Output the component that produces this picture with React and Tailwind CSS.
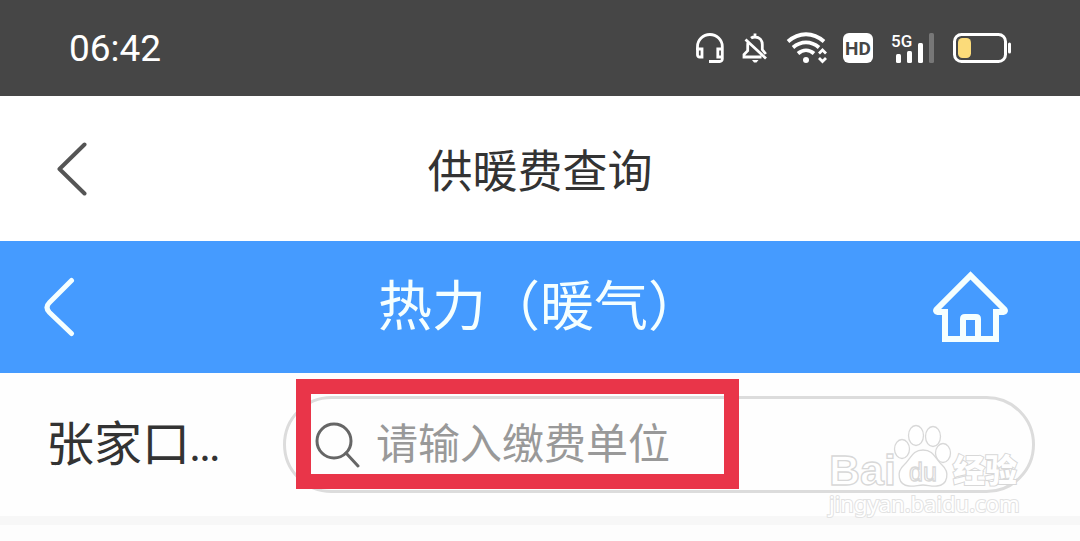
function StatusBar() {
  return (
    <header className="flex h-24 items-center justify-between bg-[#464646] px-[69px] text-white">
      <time className="font-['Roboto',sans-serif] text-[37px] font-normal leading-none">06:42</time>
      <div className="flex items-center gap-[18px]">
        <svg width="28" height="30" viewBox="0 0 28 30" fill="none" stroke="currentColor" strokeWidth="2.8" aria-hidden="true">
          <path d="M1.5 17V13.5a12.4 12 0 0 1 24.8 0V26a2.500 2.500 0 0 1-2.500 2.500H13" />
          <path d="M1.500 16H6v8H3.500a2 2 0 0 1-2-2zM26.300 16H21.800v8H26.300" />
        </svg>
        <svg width="26" height="30" viewBox="0 0 26 30" fill="none" stroke="currentColor" strokeWidth="2.800" aria-hidden="true">
          <path d="M9 5.200C10.200 4.300 11.400 4 13 4c4.600 0 7.300 3.200 7.300 7.500v5l3.500 4.500M6 9.500c-.3 1-.3 1.800-.3 3v5.200L2 21.500V24h17.500M13 0.500V4M3.500 6.500 24 25.500" />
          <path d="M10 27h6.500l-2 2.500h-2.500z" fill="currentColor" stroke="none" />
        </svg>
        <svg width="39" height="30" viewBox="-1 0 39 30" fill="none" stroke="currentColor" className="overflow-visible" aria-hidden="true">
          <path d="M1 8.500C12-1.200 26-1.200 37 8.500" strokeWidth="3.800" />
          <path d="M6 14.500c8-6.800 18-6.800 26 0" strokeWidth="3.800" />
          <path d="M11 20.500c5-4.300 11-4.300 16 0" strokeWidth="3.800" />
          <circle cx="19" cy="27" r="3" fill="currentColor" stroke="none" />
          <path d="m32 20.500 3.500-3.500 3.500 3.500M32 25l3.500 3.500L39 25" strokeWidth="2.800" />
        </svg>
        <span className="flex size-[30px] items-center justify-center rounded-md bg-white font-['Roboto',sans-serif] text-[19px] font-bold leading-none text-[#464646]">
          HD
        </span>
        <div className="relative h-[30px] w-11">
          <span className="absolute top-0 left-0 font-['Roboto',sans-serif] text-[17px] font-medium leading-4">5G</span>
          <svg width="44" height="30" viewBox="0 0 44 30" fill="currentColor" aria-hidden="true">
            <rect x="5" y="21" width="5" height="9" rx="1.500" />
            <rect x="16" y="18" width="5" height="12" rx="1.500" />
            <rect x="27" y="10" width="5" height="20" rx="1.500" />
            <rect x="38" y="0" width="5" height="30" rx="1.500" fill="#777" />
          </svg>
        </div>
        <svg width="58" height="30" viewBox="0 0 58 30" fill="none" aria-hidden="true">
          <rect x="1.500" y="1.500" width="51" height="27" rx="7" stroke="#fff" strokeWidth="3" />
          <rect x="5" y="5" width="13" height="20" rx="4.500" fill="#fbdb7a" />
          <rect x="55" y="9.500" width="3" height="11" rx="1.500" fill="#fff" />
        </svg>
      </div>
    </header>
  );
}

function TitleBar() {
  return (
    <div className="grid h-[145px] grid-cols-[1fr_auto_1fr] items-center bg-white px-14">
      <button type="button" aria-label="返回" className="justify-self-start">
        <svg width="32" height="54" viewBox="0 0 32 54" fill="none" stroke="#555" strokeWidth="4" strokeLinecap="round" strokeLinejoin="round">
          <path d="M28.500 2.500 3.500 27l25 24.500" />
        </svg>
      </button>
      <h1 className="text-[45px] leading-none text-[#333]">供暖费查询</h1>
    </div>
  );
}

function ServiceBar() {
  return (
    <div className="grid h-[132px] grid-cols-[1fr_auto_1fr] items-center bg-[#459bff] px-11 text-[#f5ffff]">
      <button type="button" aria-label="返回" className="justify-self-start">
        <svg width="32" height="60" viewBox="0 0 32 60" fill="none" stroke="currentColor" strokeWidth="5" strokeLinecap="round">
          <path d="M27.500 3.500 5.500 25.500q-5 5 0 10L27.500 56.500" />
        </svg>
      </button>
      <h2 className="pb-2 text-[54px] leading-none">热力（暖气）</h2>
      <a href="#home" aria-label="首页" className="mr-7 justify-self-end">
        <svg width="75" height="72" viewBox="0 0 75 72" fill="none" stroke="currentColor" strokeWidth="6">
          <path d="M12 68V41H4.500a1.500 1.500 0 0 1-1-2.500L37.500 4.500l34 34a1.500 1.500 0 0 1-1 2.500H63v27z" />
          <path d="M30 67V48q0-2 2-2h11q2 0 2 2v19" />
        </svg>
      </a>
    </div>
  );
}

function Watermark() {
  return (
    <svg
      aria-hidden="true"
      width="196"
      height="100"
      viewBox="0 0 196 100"
      fill="#fff"
      stroke="#d8d8d8"
      strokeWidth="1.300"
      className="pointer-events-none absolute top-12 right-[56px] overflow-visible font-['Liberation_Sans','Noto_Sans_CJK_SC',sans-serif]"
    >
      <text x="1" y="64" fontSize="43" fontWeight="700">Bai</text>
      <ellipse cx="74" cy="28" rx="7.500" ry="9.500" />
      <ellipse cx="88" cy="14.500" rx="7.500" ry="10" />
      <ellipse cx="105" cy="15.500" rx="7.500" ry="10" />
      <ellipse cx="115" cy="32" rx="7.500" ry="9.500" />
      <path d="M95 29c-11 0-12 9-19 15-8 7-6 20 5 21 6 .5 9-1 14-1s8 1.500 14 1c11-1 13-14 5-21-7-6-8-15-19-15z" />
      <text x="81" y="60" fontSize="25" fontWeight="400">du</text>
      <text x="125" y="61" fontSize="32" fontWeight="900" strokeWidth="2" paintOrder="stroke">经验</text>
      <text x="1" y="91" fontSize="22" fontWeight="400" strokeWidth="2" stroke="#e2e2e2" paintOrder="stroke" className="font-['Noto_Sans',sans-serif]">
        jingyan.baidu.com
      </text>
    </svg>
  );
}

function SearchRow() {
  return (
    <div className="relative flex h-[143px] items-center bg-[#fefefe] pr-[45px] pl-[46px]">
      <button type="button" className="w-[237px] shrink-0 pb-2 text-left text-[48px] leading-none text-[#333]">
        张家口<span className="font-['Lato',sans-serif] text-[42px]">...</span>
      </button>
      <form role="search" className="relative flex h-[97px] min-w-0 flex-1 items-center gap-4 rounded-full border-[3px] border-[#dcdcdc] pl-[29px]">
        <svg width="45" height="46" viewBox="0 0 45 46" fill="none" stroke="#666" strokeWidth="3" strokeLinecap="round" className="shrink-0" aria-hidden="true">
          <circle cx="19" cy="19" r="17" />
          <path d="m31 31 12 13" />
        </svg>
        <input
          type="search"
          aria-label="缴费单位"
          placeholder="请输入缴费单位"
          className="h-16 min-w-0 flex-1 bg-transparent pb-2 text-[42px] text-[#333] outline-none placeholder:text-[#999]"
        />
        <span aria-hidden="true" className="pointer-events-none absolute -top-5 left-[10px] h-[110px] w-[443px] border-[15px] border-[#e93549]" />
      </form>
      <Watermark />
    </div>
  );
}

export default function App() {
  return (
    <main className="min-h-screen bg-[#fdfdfd] font-['Noto_Sans_CJK_SC',sans-serif] font-normal">
      <StatusBar />
      <TitleBar />
      <ServiceBar />
      <SearchRow />
      <div className="h-[9px] bg-[#f7f7f7]" />
    </main>
  );
}
